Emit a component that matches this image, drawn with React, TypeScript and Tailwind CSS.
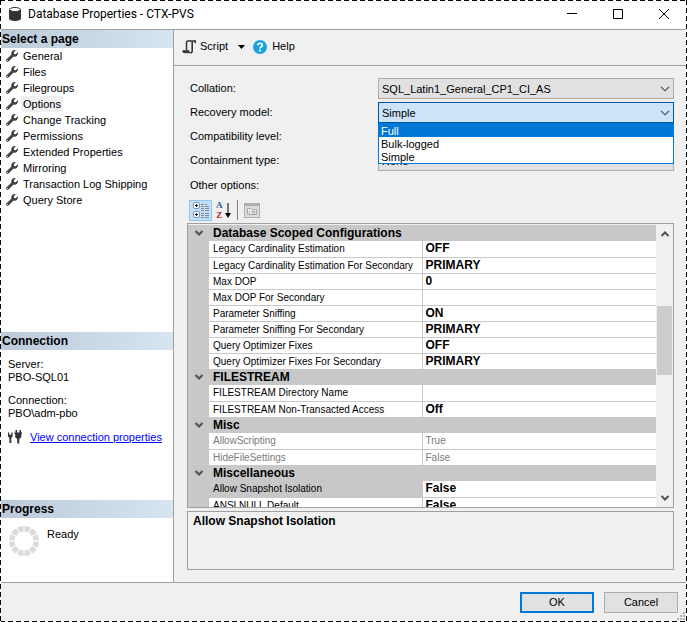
import { useState } from 'react';
import type { ReactNode } from 'react';
import { clsx } from 'clsx';
import { FaWrench } from 'react-icons/fa';

const pages = [
  'General',
  'Files',
  'Filegroups',
  'Options',
  'Change Tracking',
  'Permissions',
  'Extended Properties',
  'Mirroring',
  'Transaction Log Shipping',
  'Query Store',
];

const recoveryModels = ['Full', 'Bulk-logged', 'Simple'];

interface Option {
  name: string;
  value: string;
  readOnly?: boolean;
}

const groups: { title: string; options: Option[] }[] = [
  {
    title: 'Database Scoped Configurations',
    options: [
      { name: 'Legacy Cardinality Estimation', value: 'OFF' },
      { name: 'Legacy Cardinality Estimation For Secondary', value: 'PRIMARY' },
      { name: 'Max DOP', value: '0' },
      { name: 'Max DOP For Secondary', value: '' },
      { name: 'Parameter Sniffing', value: 'ON' },
      { name: 'Parameter Sniffing For Secondary', value: 'PRIMARY' },
      { name: 'Query Optimizer Fixes', value: 'OFF' },
      { name: 'Query Optimizer Fixes For Secondary', value: 'PRIMARY' },
    ],
  },
  {
    title: 'FILESTREAM',
    options: [
      { name: 'FILESTREAM Directory Name', value: '' },
      { name: 'FILESTREAM Non-Transacted Access', value: 'Off' },
    ],
  },
  {
    title: 'Misc',
    options: [
      { name: 'AllowScripting', value: 'True', readOnly: true },
      { name: 'HideFileSettings', value: 'False', readOnly: true },
    ],
  },
  {
    title: 'Miscellaneous',
    options: [
      { name: 'Allow Snapshot Isolation', value: 'False' },
      { name: 'ANSI NULL Default', value: 'False' },
    ],
  },
];

function Chevron({ up = false, bold = false }: { up?: boolean; bold?: boolean }) {
  return (
    <svg
      className={clsx('h-[6px] w-[10px]', up && 'rotate-180')}
      viewBox="0 0 10 6"
      fill="none"
      stroke={bold ? '#505050' : '#444'}
      strokeWidth={bold ? 2 : 1.1}
      aria-hidden="true"
    >
      <path d={bold ? 'M1.500 1 5 4.500 8.500 1' : 'M1 .8 5 4.800 9 .8'} />
    </svg>
  );
}

function DatabaseIcon() {
  return (
    <svg className="h-[14px] w-3" viewBox="0 0 12 14" aria-hidden="true">
      <path d="M0 2.500v9C0 13 2.700 14 6 14s6-1 6-2.500v-9z" fill="#333" />
      <ellipse cx="6" cy="2.500" rx="5.500" ry="2" fill="#fff" stroke="#333" />
    </svg>
  );
}

function ScriptIcon() {
  return (
    <svg className="h-[14px] w-[14px]" viewBox="0 0 14 14" fill="none" stroke="#333" aria-hidden="true">
      <path d="M4.500 10V2.500C4.500 1.500 5 1 6 1h7.300v2.200" strokeWidth="1.500" />
      <path d="M10.200 1.500v9.300c0 1.300-.5 2-1.700 2" strokeWidth="1.600" />
      <path d="M.8 10.800h6.200c0 1.200.5 1.900 1.500 1.900H2.300C1.300 12.700.8 12 .8 10.800z" fill="#333" />
    </svg>
  );
}

function HelpIcon() {
  return (
    <svg className="h-[14px] w-[14px]" viewBox="0 0 14 14" fill="none" aria-hidden="true">
      <circle cx="7" cy="7" r="7" fill="#1ba1e2" />
      <path d="M4.800 5.300C4.800 2.500 9.300 2.600 9.300 5.200 9.300 6.800 7.100 6.700 7.100 8.500" stroke="#fff" strokeWidth="1.700" />
      <path d="M6.200 9.600h1.800v1.800H6.200z" fill="#fff" />
    </svg>
  );
}

function PlugsIcon() {
  return (
    <svg className="h-[14px] w-[14px]" viewBox="0 0 14 14" fill="#333" aria-hidden="true">
      <path d="M0 2.500h1.300v2.300h2V2.500h1.300v4L3.300 7.800V13H1.400V7.800L0 6.500z" />
      <path d="M7.500 0h1.500v2.500h2.400V0h1.500v2.500H14v1.400h-.7v3.300l-2 1.800v4.500H9.200V9l-2-1.800V3.900h-.7V2.500h1z" />
    </svg>
  );
}

function Spinner() {
  return (
    <svg className="h-[30px] w-[30px]" viewBox="0 0 30 30" fill="none" aria-hidden="true">
      <circle
        cx="15"
        cy="15"
        r="12.250"
        stroke="#dadada"
        strokeWidth="5.500"
        pathLength="120"
        strokeDasharray="8.300 1.700"
        strokeDashoffset="-.85"
      />
    </svg>
  );
}

function CategorizedIcon() {
  return (
    <svg className="h-4 w-4" viewBox="0 0 16 16" fill="none" aria-hidden="true">
      {[0, 9].map((y) => (
        <g key={y} transform={`translate(0 ${y})`}>
          <rect x=".5" y=".5" width="6" height="6" rx="1.500" fill="#fff" stroke="#7f95ad" />
          <path d="M2 3.500h3M3.500 2v3" stroke="#111" />
        </g>
      ))}
      <path
        d="M8 2.500h3M8 4.500h3M8 6.500h3M8 8.500h3M8 11.500h3M8 13.500h3M8 15.500h3M12 2.500h2M12 4.500h4M12 6.500h4M12 8.500h4M12 11.500h4M12 13.500h4M12 15.500h4"
        stroke="#7d8b9b"
      />
    </svg>
  );
}

function PropertyPagesIcon() {
  return (
    <svg className="h-[15px] w-4" viewBox="0 0 16 15" fill="none" stroke="#a8a8a8" aria-hidden="true">
      <path d="M0 0h16v15H0z" fill="#b0b0b0" stroke="none" />
      <path d="M1 3h14v11H1z" fill="#dcdcdc" stroke="none" />
      <path d="M3.500 11.500v-6h3l1 1h5v5z" fill="#f0f0f0" />
      <path d="M5 8.500h1M7.500 8.500h4M5 10h1M7.500 10h4" />
    </svg>
  );
}

function PanelTitle({ children }: { children: ReactNode }) {
  return (
    <h2 className="h-[18px] bg-linear-to-r from-[#bccad9] to-[#d7e4f2] pl-[2px] text-[12px] leading-[18px] font-bold">
      {children}
    </h2>
  );
}

interface ComboProps {
  id: string;
  value: string;
  items: string[];
  open?: boolean;
  onChange?: (value: string) => void;
}

function Combo({ id, value, items, open = false, onChange }: ComboProps) {
  return (
    <div className="relative">
      <select
        id={id}
        value={value}
        onChange={(e) => onChange?.(e.target.value)}
        className={clsx(
          'block h-[21px] w-full appearance-none border pt-px pr-6 pl-[3px] outline-none',
          open ? 'border-[#005499] bg-[#cce4f7]' : 'border-[#adadad] bg-[#e1e1e1]',
        )}
      >
        {items.map((item) => (
          <option key={item}>{item}</option>
        ))}
      </select>
      <span className="pointer-events-none absolute inset-y-0 right-1 flex items-center">
        <Chevron />
      </span>
      {open && (
        <ul className="absolute inset-x-0 top-full z-10 border border-[#0078d7] bg-white">
          {items.map((item, i) => (
            <li
              key={item}
              className={clsx('h-[13px] pl-[2px] leading-[14px]', i === 0 && 'bg-[#0078d7] text-white')}
            >
              {item}
            </li>
          ))}
        </ul>
      )}
    </div>
  );
}

function OptionsTable() {
  return (
    <table className="w-full table-fixed border-collapse">
      <colgroup>
        <col className="w-[21px]" />
        <col className="w-[213px]" />
        <col />
      </colgroup>
      {groups.map((group) => (
        <tbody key={group.title}>
          <tr className="h-4 bg-[#c8c8c8]">
            <td className="p-0">
              <button aria-label={`Collapse ${group.title}`} className="flex h-[15px] w-full items-center justify-center">
                <Chevron bold />
              </button>
            </td>
            <th colSpan={2} className="p-0 pl-1 text-left text-[12px] leading-[15px] font-bold">
              {group.title}
            </th>
          </tr>
          {group.options.map((option) => {
            const selected = option.name === 'Allow Snapshot Isolation';
            return (
              <tr key={option.name} className={clsx('h-4', option.readOnly && 'text-[#7a7a7a]')}>
                <td className="bg-[#c8c8c8] p-0" />
                <td
                  className={clsx(
                    'border-r border-b border-[#c8c8c8] p-0 pl-1 text-[10px] leading-[15px] whitespace-nowrap',
                    selected ? 'bg-[#c8c8c8]' : 'bg-white',
                  )}
                >
                  {option.name}
                </td>
                <td
                  className={clsx(
                    'border-b border-[#c8c8c8] bg-white p-0 pl-[3px] leading-[15px]',
                    option.readOnly ? 'text-[10px]' : 'text-[12px] font-bold',
                  )}
                >
                  {option.value}
                </td>
              </tr>
            );
          })}
        </tbody>
      ))}
    </table>
  );
}

export default function App() {
  const [page, setPage] = useState('Options');
  const [recovery, setRecovery] = useState('Simple');

  return (
    <div className="relative flex h-screen flex-col bg-[#f0f0f0] font-['Liberation_Sans',Arial,sans-serif] text-[11px] text-black">
      {/* Title bar */}
      <header className="flex h-[30px] shrink-0 items-center border-b border-[#a0a0a0] bg-white pb-[2px] pl-[9px]">
        <DatabaseIcon />
        <h1 className="ml-[7px] flex-1 font-[Roboto,sans-serif] text-[12px]">Database Properties - CTX-PVS</h1>
        <button aria-label="Minimize" className="flex h-full w-[46px] items-center justify-center">
          <svg className="h-[10px] w-[10px]" viewBox="0 0 10 10" stroke="#000">
            <path d="M0 4.500h10" />
          </svg>
        </button>
        <button aria-label="Maximize" className="flex h-full w-[46px] items-center justify-center">
          <svg className="h-[10px] w-[10px]" viewBox="0 0 10 10" fill="none" stroke="#000">
            <path d="M.5.5h9v9h-9z" />
          </svg>
        </button>
        <button aria-label="Close" className="flex h-full w-[46px] items-center justify-center">
          <svg className="h-[10px] w-[10px]" viewBox="0 0 10 10" stroke="#000">
            <path d="M0 0l10 10M10 0 0 10" />
          </svg>
        </button>
      </header>

      <div className="flex min-h-0 flex-1">
        {/* Page list and status */}
        <aside className="flex w-[174px] shrink-0 flex-col border-r border-[#a0a0a0] bg-white">
          <PanelTitle>Select a page</PanelTitle>
          <nav className="flex-1">
            {pages.map((name) => (
              <button key={name} onClick={() => setPage(name)} className="flex h-4 w-full items-center pl-[6px]">
                <FaWrench className="h-3 w-3 text-[#424242]" />
                <span className={clsx('ml-[3px] px-[2px] leading-4', page === name && 'bg-[#f0f0f0]')}>{name}</span>
              </button>
            ))}
          </nav>
          <PanelTitle>Connection</PanelTitle>
          <div className="h-[150px] pt-2 pl-2 leading-[13px]">
            <p>Server:</p>
            <p>PBO-SQL01</p>
            <p className="mt-[10px]">Connection:</p>
            <p>PBO\adm-pbo</p>
            <div className="mt-[10px] flex items-center gap-2">
              <PlugsIcon />
              <a href="#" className="text-[#0000ff] underline">View connection properties</a>
            </div>
          </div>
          <PanelTitle>Progress</PanelTitle>
          <div className="flex h-16 gap-2 pt-2 pl-[9px]">
            <Spinner />
            <span>Ready</span>
          </div>
        </aside>

        <main className="flex min-w-0 flex-1 flex-col">
          <div className="flex h-9 shrink-0 items-center border-b border-[#a0a0a0] pb-[2px] pl-2">
            <button className="flex items-center gap-1">
              <ScriptIcon />
              Script
            </button>
            <button aria-label="Script options" className="ml-[10px]">
              <svg className="h-1 w-[7px]" viewBox="0 0 7 4">
                <path d="M0 0h7L3.500 4z" />
              </svg>
            </button>
            <button className="ml-2 flex items-center gap-[5px]">
              <HelpIcon />
              Help
            </button>
          </div>

          <div className="flex min-h-0 flex-1 flex-col pt-3 pr-[13px] pb-3 pl-[13px]">
            <div className="grid grid-cols-[188px_1fr] items-center gap-y-[3px] pl-[3px]">
              <label htmlFor="collation">Collation:</label>
              <Combo id="collation" value="SQL_Latin1_General_CP1_CI_AS" items={['SQL_Latin1_General_CP1_CI_AS']} />
              <label htmlFor="recovery">Recovery model:</label>
              <Combo id="recovery" value={recovery} items={recoveryModels} open onChange={setRecovery} />
              <label htmlFor="compatibility">Compatibility level:</label>
              <Combo id="compatibility" value="" items={['']} />
              <label htmlFor="containment">Containment type:</label>
              <Combo id="containment" value="None" items={['None', 'Partial']} />
            </div>

            <p className="mt-2 pl-[3px] leading-[13px]">Other options:</p>

            <div className="mt-[7px] flex h-[22px] shrink-0 items-center pl-[2px]">
              <button aria-label="Categorized" className="flex h-[21px] w-[23px] items-center justify-center border border-[#90c8f6] bg-[#c4e0f7]">
                <CategorizedIcon />
              </button>
              <button aria-label="Alphabetical" className="ml-1 flex items-center">
                <span className="flex flex-col font-['Liberation_Serif',serif] text-[9px] leading-[10px] font-bold">
                  <span className="text-[#2b579a]">A</span>
                  <span className="text-[#a4262c]">Z</span>
                </span>
                <svg className="ml-[2px] h-[15px] w-[6px]" viewBox="0 0 6 15">
                  <path d="M2.500 0h1v10H6L3 15 0 10h2.500z" />
                </svg>
              </button>
              <span className="mx-[6px] h-5 w-px bg-[#808080]" />
              <button aria-label="Property pages" disabled>
                <PropertyPagesIcon />
              </button>
            </div>

            <div className="mt-[2px] flex min-h-0 flex-1 border border-[#a0a0a0] pt-px">
              <div className="min-w-0 flex-1 overflow-hidden">
                <OptionsTable />
              </div>
              <div className="flex w-[17px] flex-col items-center justify-between py-[6px]">
                <Chevron up bold />
                <div className="mt-[69px] h-[69px] w-[15px] bg-[#cdcdcd]" />
                <div className="flex-1" />
                <Chevron bold />
              </div>
            </div>

            <div className="mt-[3px] h-[59px] shrink-0 border border-[#a0a0a0] px-[5px] pt-[2px] text-[12px] leading-[15px] font-bold">
              Allow Snapshot Isolation
            </div>
          </div>
        </main>
      </div>

      <footer className="flex h-10 shrink-0 justify-end gap-[10px] border-t border-[#a0a0a0] pt-[9px] pr-[9px]">
        <button className="h-[21px] w-[74px] border-2 border-[#0078d7] bg-[#e1e1e1]">OK</button>
        <button className="h-[21px] w-[74px] border border-[#adadad] bg-[#e1e1e1]">Cancel</button>
      </footer>

      <svg className="absolute right-[2px] bottom-[2px] h-2 w-2" viewBox="0 0 8 8" fill="#b8b8b8" aria-hidden="true">
        <path d="M6 0h2v2H6zM6 3h2v2H6zM6 6h2v2H6zM3 3h2v2H3zM3 6h2v2H3zM0 6h2v2H0z" />
      </svg>

      {/* Dashed selection frame */}
      <div className="pointer-events-none absolute inset-x-0 top-0 h-px bg-[repeating-linear-gradient(to_right,#000_0_5px,#fff_5px_8px)]" />
      <div className="pointer-events-none absolute inset-x-0 bottom-0 h-px bg-[repeating-linear-gradient(to_right,#000_0_5px,#fff_5px_8px)]" />
      <div className="pointer-events-none absolute inset-y-0 left-0 w-px bg-[repeating-linear-gradient(to_bottom,#000_0_5px,#fff_5px_8px)]" />
      <div className="pointer-events-none absolute inset-y-0 right-0 w-px bg-[repeating-linear-gradient(to_bottom,#000_0_5px,#fff_5px_8px)]" />
    </div>
  );
}
